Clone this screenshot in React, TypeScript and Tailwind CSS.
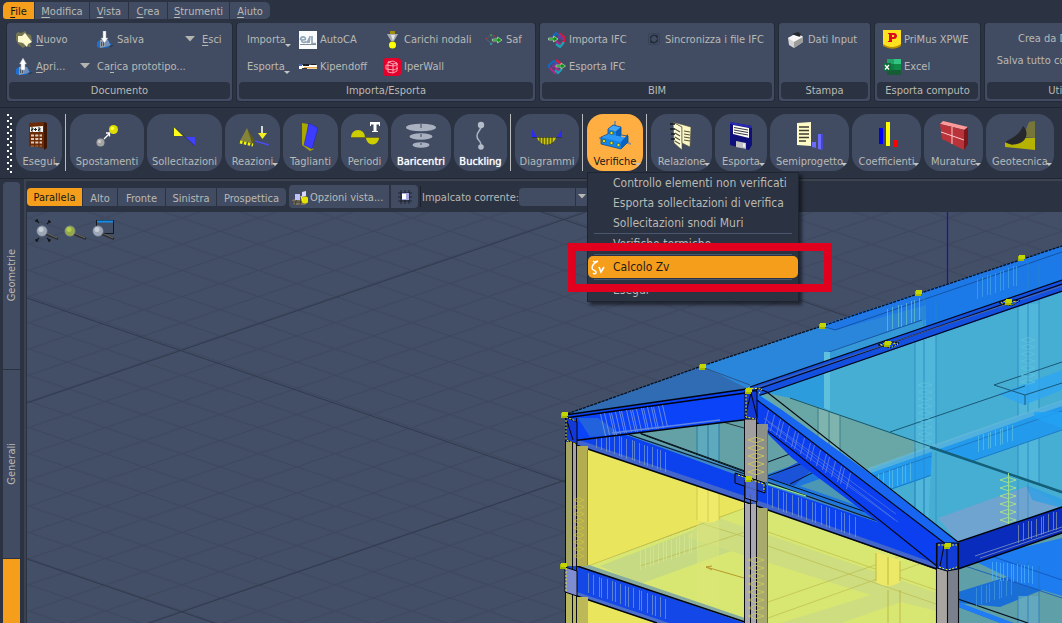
import React from "react";

type Kids = { children?: React.ReactNode };

const Svg = ({ w, h, children }: Kids & { w: number; h: number }) => (
  <svg width={w} height={h} viewBox={`0 0 ${w} ${h}`} className="shrink-0" aria-hidden="true">
    {children}
  </svg>
);

/* ---------- small ribbon icons ---------- */

const NewIcon = () => (
  <Svg w={18} h={18}>
    <path d="M1 3l2-2 3 1 4-2 2 3 4 1 1 5-2 4 1 3-5-1-3 2-5-4-2-4z" fill="#8c8a4c" opacity=".7" />
    <path d="M3 5l4 0 3-3 3 4 4 5-4 2-1 3-4-4-5-1z" fill="#fdf9cf" />
  </Svg>
);

const BuildingIcon = ({ up }: { up?: boolean }) => (
  <Svg w={18} h={18}>
    <path d="M1 11l3-2v8l-3-1z" fill="#1f6fd0" />
    <path d="M4 9l6-2 7 8-7 2-6 0z" fill="#0f62c4" />
    <path d="M4 9l5-1v8l-5 1z" fill="#8f9aa8" />
    <path d="M9 9l3 0 3 6-6 1z" fill="#6f8fb8" />
    <path d="M5 11h1v4H5zM7 11h1v4H7z" fill="#4a5566" />
    <path d={up ? "M6 12V6H4.500L8 0l3.500 6H10v6z" : "M7 0h3v7h2l-3.500 5L5 7h2z"} fill="#fff" stroke="#9aa3ad" strokeWidth=".5" />
    <path d="M12 15l6-1-3 2z" fill="#2a2d33" />
  </Svg>
);

const DwgIcon = () => (
  <Svg w={18} h={18}>
    <rect width="18" height="18" fill="#fafbfc" />
    <path d="M1.500 9c0-4 5-4 5-1 0 1-4 1-4 1 0 3 3 3 5 1.500M8 12l3-6M11 5l-1 7M13 5v7.500h4" fill="none" stroke="#93a6b8" strokeWidth="1.700" />
    <path d="M1 13.500h16" stroke="#53606d" strokeWidth=".7" />
  </Svg>
);

const KipIcon = () => (
  <Svg w={18} h={8}>
    <path d="M0 2h18v4H0z" fill="#fdfdfd" />
    <path d="M0 1h3v2H0z" fill="#3e64c4" />
    <path d="M4 1h6v2H4zM12 1h5v1h-5z" fill="#1b1d20" />
    <path d="M5 4h13v1.500H5z" fill="#e8a74a" />
    <path d="M3 5h5v1H3z" fill="#30343a" />
  </Svg>
);

const LoadIcon = () => (
  <Svg w={18} h={18}>
    <path d="M7 0h5v4H7z" fill="#a58d10" />
    <path d="M4 3h11l-4 7H8z" fill="#a9adb2" />
    <path d="M8 4l2 6 2-6z" fill="#e4e6e8" />
    <circle cx="9.500" cy="14" r="3.500" fill="#ffff00" />
  </Svg>
);

const IperIcon = () => (
  <Svg w={18} h={18}>
    <rect width="18" height="18" rx="3.500" fill="#e4002b" />
    <path d="M5 4l5-1 4 2v8l-4 2-5-1zM5 4l5 2 4-1M10 6v9M3 7l8 1 4-2M3 11l8 1 4-2M3 7v4" fill="none" stroke="#ffc4ce" strokeWidth=".8" />
  </Svg>
);

const GreenArrow = ({ x = 0, y = 0 }: { x?: number; y?: number }) => (
  <path
    transform={`translate(${x} ${y})`}
    d="M.5 3h5V1L10 4 5.500 7V5h-5z"
    fill="#0d8f13"
    stroke="#bfe0bf"
    strokeWidth=".7"
  />
);

const SafIcon = () => (
  <Svg w={18} h={14}>
    <path d="M1 6l5-4 6 3-5 6zM1 6l6 5M6 2l1 9" fill="none" stroke="#58606a" strokeWidth=".8" />
    <path d="M0 5h2v1H0zM8 2h1.500v1.500H8z" fill="#b83232" />
    <circle cx="6" cy="11" r="1" fill="#29a0b8" />
    <circle cx="6" cy="2" r="1" fill="#3f9c55" />
    <GreenArrow x={7} y={3} />
  </Svg>
);

const IfcIcon = ({ out }: { out?: boolean }) => (
  <Svg w={18} h={16}>
    <g fill="none" strokeWidth="2.200">
      <path d={out ? "M1 9V6l5-4 4 3" : "M5 5l3-4 5 4"} stroke="#1767b8" />
      <path d={out ? "M8 1l4 3v3" : "M11 1l5 4v4l-3 3"} stroke="#d81b3c" />
      <path d={out ? "M2 9l5 5 3-3-4-4" : "M7 8l5 5"} stroke="#b3268f" />
      <path d={out ? "M7 11l3 3 4-4" : "M8 12l4 3 4-5"} stroke="#1d9fb4" />
      <path d={out ? "M4 8l3-3 3 2" : "M9 7l3-3 3 4"} stroke="#6b3ca0" />
    </g>
    <GreenArrow x={out ? 7.500 : 0} y={3} />
  </Svg>
);

const SyncIcon = () => (
  <Svg w={16} h={16}>
    <rect x="2.500" y="1.500" width="11" height="11" rx="1.500" fill="none" stroke="#38425a" />
    <path d="M4.500 6.500A3.500 3.500 0 0 1 11 5V3M11.500 7.500A3.500 3.500 0 0 1 5 9v2" fill="none" stroke="#232a38" strokeWidth="1.500" />
  </Svg>
);

const PrinterIcon = () => (
  <Svg w={18} h={18}>
    <path d="M1 7l9-5 6 4v5l-9 6-5-3z" fill="#d3d3d3" />
    <path d="M1 7l6 4 9-5-6-4z" fill="#f4f4f4" />
    <path d="M7 11l9-5v5l-9 6z" fill="#9c9c9c" />
    <path d="M5 3l6-2 3 2-1 3-6-2z" fill="#25282c" />
    <path d="M7 5l4 2 2-1" stroke="#fff" fill="none" />
  </Svg>
);

const PrimusIcon = () => (
  <Svg w={18} h={19}>
    <path d="M0 0h18v15c-6 5-12 3-18 0z" fill="#ffe21f" />
    <path d="M0 14c6 4 12 4 18 0v2c-6 4-12 3-18 0z" fill="#b88f00" />
    <path d="M5 3h6c4 0 4 6 0 6H9v3H5V11h1V4H5zM9 5v2h1.500c1 0 1-2 0-2z" fill="#dc0a1e" />
  </Svg>
);

const ExcelIcon = () => (
  <Svg w={18} h={16}>
    <rect x="4" width="7" height="16" fill="#107c41" />
    <rect x="11" width="7" height="5" fill="#33c481" />
    <rect x="4" width="7" height="5" fill="#21a366" />
    <rect x="11" y="5" width="7" height="6" fill="#108a48" />
    <rect x="4" y="11" width="14" height="5" fill="#185c37" />
    <rect y="4" width="8" height="8" fill="#0f6e3a" />
    <path d="M2 6l4 4.500M6 6l-4 4.500" stroke="#fff" strokeWidth="1.300" />
  </Svg>
);

const Caret = () => (
  <Svg w={10} h={8}>
    <path d="M0 0h10L5 5.500z" fill="#b4b4b0" />
  </Svg>
);

const Tick = () => (
  <Svg w={6} h={4}>
    <path d="M0 0h6L3 3z" fill="#c4c4c0" />
  </Svg>
);

/* ---------- large toolbar icons ---------- */

const CalcIcon = () => (
  <Svg w={30} h={30}>
    <path d="M5 2l15-1v26l-15-2z" fill="#6b2a05" />
    <path d="M20 1l3 1v25l-3 2z" fill="#3d1703" />
    <path d="M6 6l13-1v6l-13 0z" fill="#f5f5f0" />
    <path d="M7 7h2v1.500H7.500V10H9M10 8.500h3M11.500 7v3M14 7h2v1.500h-1.500V10h2" stroke="#222" fill="none" />
    <path d="M7 14.500h11M7 18h11M7 21.500h11" stroke="#d9cbbd" strokeWidth="2" strokeDasharray="3 1.300" />
    <path d="M7 25h11" stroke="#a77b58" strokeWidth="1" strokeDasharray="3 1.300" />
  </Svg>
);

const MoveIcon = () => (
  <Svg w={30} h={30}>
    <circle cx="8.500" cy="21.500" r="4" fill="#a4a4a4" />
    <circle cx="7.500" cy="20.500" r="1.500" fill="#cfcfcf" />
    <circle cx="21.500" cy="8.500" r="4.500" fill="#dede00" />
    <circle cx="20.500" cy="7.500" r="1.800" fill="#ffff3c" />
    <path d="M12 18l5-5M14 12h3.500v3.500" stroke="#fff" strokeWidth="1.300" fill="none" />
  </Svg>
);

const StressIcon = () => (
  <Svg w={30} h={30}>
    <path d="M4 6l9 9H4z" fill="#ffff19" />
    <path d="M15 16h10v9z" fill="#4040ff" />
    <path d="M4 6l21 19" stroke="#27272a" strokeWidth=".5" />
  </Svg>
);

const ReactIcon = () => (
  <Svg w={32} h={30}>
    <path d="M10 7l8 13-5 3z" fill="#5c5a1e" />
    <path d="M10 7L3 20l12 2z" fill="#85833a" />
    <path d="M3 21l13 3" stroke="#f3f300" strokeWidth="3" strokeDasharray="2.500 1.500" />
    <path d="M25 5v8" stroke="#d6d6d6" strokeWidth="2" />
    <path d="M21 12h9l-4.500 6z" fill="#f5ee1f" />
    <path d="M18 20l14 4" stroke="#4b4bf0" strokeWidth="1.500" />
  </Svg>
);

const CutIcon = () => (
  <Svg w={30} h={30}>
    <path d="M6 2l6 1-2 21 8 4-4 2-8-6z" fill="#a9a800" />
    <path d="M13 2l9 5-6 21-8-4z" fill="#3c3cff" stroke="#2020b8" strokeWidth=".5" />
  </Svg>
);

const PeriodIcon = () => (
  <Svg w={32} h={30}>
    <path d="M2 16a7 7 0 0 1 14 0z" fill="#cdcd00" />
    <path d="M17 17a6.500 6.500 0 0 0 13 0z" fill="#cdcd00" />
    <path d="M2 16.500h28" stroke="#6e6d23" />
    <path d="M21 1h10v4h-1V3.500h-2.500V10H29v1h-6v-1h1.500V3.500H22V5h-1z" fill="#fff" />
  </Svg>
);

const DisksIcon = () => (
  <Svg w={32} h={30}>
    <g fill="#a9b0bf">
      <ellipse cx="16" cy="6.500" rx="15" ry="3.800" />
      <ellipse cx="16" cy="15.500" rx="11.500" ry="3.200" />
      <ellipse cx="16" cy="24" rx="8.500" ry="2.700" />
    </g>
    <path d="M16 3v4M16 13v3M16 22v2" stroke="#3f4a61" />
  </Svg>
);

const BucklingIcon = () => (
  <Svg w={20} h={30}>
    <path d="M10 5c0 5-4 5-4 10s4 4 4 9" stroke="#a9b0bf" strokeWidth="1.600" fill="none" />
    <circle cx="10" cy="4" r="3.200" fill="#b4bbc9" />
    <circle cx="10" cy="26" r="2.800" fill="#b4bbc9" />
  </Svg>
);

const DiagramIcon = () => (
  <Svg w={32} h={30}>
    <path d="M1 8l5 8H1zM31 8l-5 8h5z" fill="#2c2cf0" />
    <path d="M6 16h19c-2 10-17 10-19 0z" fill="#cfcb00" />
    <path d="M9 16v6M12 16v8M15 16v8M18 16v8M21 16v7" stroke="#33331a" />
    <path d="M1 16.500h30" stroke="#22283a" strokeWidth=".6" />
  </Svg>
);

const BlocksIcon = () => (
  <Svg w={32} h={30}>
    <path d="M0 17l12 2M24 20l8 3M16 0v8" stroke="#8f8f8f" strokeWidth="2" />
    <path d="M9 8l5-4 8 2-3 4z" fill="#41a8ff" />
    <path d="M9 8l8 2v7l-8-2z" fill="#1386ee" />
    <path d="M17 10l5-4v10l-5 3z" fill="#0863c0" />
    <path d="M2 17l7-4 20 4-5 5z" fill="#2c98f8" />
    <path d="M2 16l20 5v7L2 23z" fill="#1386ee" />
    <path d="M22 21l7-8v8l-7 7z" fill="#0863c0" />
    <path d="M9 8l5-4 8 2v8l7 1v6l-7 7L2 23v-7l7-3z" fill="none" stroke="#0a4c98" strokeWidth=".8" />
    <g fill="#f2e21c" stroke="#274b1c" strokeWidth=".6">
      <circle cx="12.500" cy="12" r="1.600" />
      <circle cx="5" cy="20" r="1.600" />
      <circle cx="12.500" cy="22" r="1.600" />
      <circle cx="19.500" cy="24" r="1.600" />
    </g>
  </Svg>
);

const NotebookIcon = () => (
  <Svg w={30} h={30}>
    <path d="M6 1l9 5v23l-8-7z" fill="#fffbd6" stroke="#494936" strokeWidth=".6" />
    <path d="M6 1l18 5-1 20-8-4V6z" fill="#fbf7c4" stroke="#494936" strokeWidth=".6" />
    <path d="M17 10l6 1M17 13l6 1M17 16l6 1M17 19l6 1M8 8l5 3M8 12l5 3M8 16l5 3M8 20l5 3" stroke="#55543c" strokeWidth="1.100" />
    <path d="M3 3h5M3 8h5M4 13h4M4 18h4" stroke="#15161a" strokeWidth="1.500" />
  </Svg>
);

const FloppyIcon = () => (
  <Svg w={30} h={30}>
    <path d="M4 1l22 4v19l-3 5-19-5z" fill="#10107a" />
    <path d="M4 1l22 4v2L4 3z" fill="#2b2bb4" />
    <path d="M7 4l16 3v10L7 13z" fill="#fdfdf4" />
    <path d="M8 6.500l14 2.500M8 9l14 2.500M8 11.500l14 2.500" stroke="#3b3b44" />
    <path d="M10 20l10 2v6l-10-2z" fill="#c2c2c2" />
    <path d="M17 22l2 .5v4l-2-.5z" fill="#eee" />
  </Svg>
);

const SemiIcon = () => (
  <Svg w={30} h={30}>
    <path d="M2 2l14-1v24l-14-1z" fill="#fdfac8" />
    <path d="M4 6h10M4 9.500h10M4 13h10M4 16.500h10M4 20h7" stroke="#3e3d30" strokeWidth="1.300" />
    <path d="M17 21h4v6l-4-1zM23 13h5v16l-5-1z" fill="#6b6bff" />
    <path d="M26 13h2v16h-2z" fill="#4747c4" />
  </Svg>
);

const CoefIcon = () => (
  <Svg w={30} h={30}>
    <path d="M7 7h4v16H7z" fill="#0000f5" />
    <path d="M14 1h4v24h-4z" fill="#ffff00" />
    <path d="M21 19h5v7h-5z" fill="#ff0000" />
  </Svg>
);

const WallIcon = () => (
  <Svg w={32} h={30}>
    <path d="M2 3l3-3 25 6-3 3z" fill="#ff9a9a" />
    <path d="M2 3l24 6v20L4 18z" fill="#b8343a" />
    <path d="M26 9l4-3v17l-4 6z" fill="#7d161a" />
    <path d="M3 11l23 8M14 6v17" stroke="#ffc9c9" strokeWidth="1" />
  </Svg>
);

const GeoIcon = () => (
  <Svg w={32} h={30}>
    <path d="M31 0v17l-12-1L25 1z" fill="#77763a" />
    <path d="M1 21l7 3 12-7h11v12L1 26z" fill="#b5b300" />
    <path d="M1 21C9 17 16 13 19 5a10 10 0 0 1-3 17C10 25 5 23 1 21z" fill="#26282d" />
  </Svg>
);

/* ---------- ribbon building blocks ---------- */

const Mnemonic = ({ text, at = 0 }: { text: string; at?: number }) => (
  <span className="whitespace-pre">
    {text.slice(0, at)}
    <span className="underline underline-offset-2">{text[at]}</span>
    {text.slice(at + 1)}
  </span>
);

const Cmd = ({ icon, children, caret }: Kids & { icon?: React.ReactNode; caret?: boolean }) => (
  <button className="flex h-[27px] items-center gap-[3px] whitespace-nowrap text-left">
    {icon}
    <span>{children}</span>
    {caret && (
      <span className="-ml-1 mt-3">
        <Tick />
      </span>
    )}
  </button>
);

const Group = ({ title, size, children }: Kids & { title: string; size: string }) => (
  <section className={`flex h-[78px] shrink-0 flex-col rounded-[3px] bg-[#414c63] p-0.5 shadow-[0_0_0_1px_#242b38] ${size}`}>
    <div className="h-[57px] pt-px">{children}</div>
    <h2 className="h-[17px] rounded-[4px] bg-[#2b3241] text-center leading-[18px]">{title}</h2>
  </section>
);

type ToolProps = {
  icon: React.ReactNode;
  label: string;
  size: string;
  menu?: boolean;
  bold?: boolean;
  active?: boolean;
};

const Tool = ({ icon, label, size, menu, bold, active }: ToolProps) => (
  <button
    className={`relative flex h-[57px] shrink-0 flex-col items-center rounded-2xl pt-[7px] ${size} ${
      active ? "bg-[#ffae42] text-[#181818]" : bold ? "bg-[#414c63] text-white [text-shadow:0_0_1px_#fff]" : "bg-[#414c63]"
    }`}
  >
    {icon}
    <span className="mt-[3px] whitespace-nowrap leading-4">{label}</span>
    {menu && (
      <span className="absolute bottom-1 right-0.5">
        <Tick />
      </span>
    )}
  </button>
);

const Bar = () => <div className="h-[57px] w-0.5 shrink-0 border-r border-[#2b3241] bg-[#b9bbbd]" />;

/* ---------- menu ---------- */

const MenuRule = () => <hr className="mx-1.5 border-0 border-t border-[#4a5670]" />;

const MenuEntry = ({ children }: Kids) => (
  <button role="menuitem" className="block h-5 w-full whitespace-nowrap pl-[25px] text-left leading-5">
    {children}
  </button>
);

const VerificheMenu = () => (
  <div
    role="menu"
    className="absolute left-0 top-[58px] z-20 w-[212px] border border-[#1e2430] bg-[#2b3241] pb-px text-xs shadow-[3px_3px_3px_rgba(0,0,0,0.5)]"
  >
    <MenuEntry>Controllo elementi non verificati</MenuEntry>
    <MenuEntry>Esporta sollecitazioni di verifica</MenuEntry>
    <MenuEntry>Sollecitazioni snodi Muri</MenuEntry>
    <MenuRule />
    <MenuEntry>Verifiche termiche</MenuEntry>
    <MenuRule />
    <div className="relative py-px">
      <button role="menuitem" className="flex h-[22px] w-[210px] items-center rounded-[5px] bg-[#f59e1c] text-left text-[#1c1c1c]">
        <span className="w-[25px] pl-0.5">
          <Svg w={16} h={16}>
            <path d="M3 2c1 1 3 1 5 0-4 2-6 5-6 7 0 3 5 2 4 5-1 1-2 1-3 0" fill="none" stroke="#fff" strokeWidth="1.400" />
            <path d="M9 8l2 5 3-5" fill="none" stroke="#fff" strokeWidth="1.600" />
          </Svg>
        </span>
        Calcolo Zv
      </button>
      <div className="pointer-events-none absolute -bottom-[13px] -left-5 -right-[34px] -top-3 border-8 border-[#e2001f]" />
    </div>
    <MenuRule />
    <MenuEntry>Esegui</MenuEntry>
  </div>
);

/* ---------- 3D model ---------- */

type HatchProps = { a: [number, number]; b: [number, number]; h: number; n: number; c: string; lean?: number; o?: number };

const Hatch = ({ a, b, h, n, c, lean = 0, o = 0.7 }: HatchProps) => {
  let d = "";
  for (let i = 0; i < n; i++) {
    const t = (i + ((i * 7) % 3) * 0.2) / n;
    const x = Math.round(a[0] + (b[0] - a[0]) * t) + 0.5;
    const y = Math.round(a[1] + (b[1] - a[1]) * t);
    d += `M${x} ${y}l${lean} ${h}`;
  }
  return <path d={d} stroke={c} strokeWidth="1" fill="none" opacity={o} />;
};

const Zig = ({ x, y, w, n, step, c }: { x: number; y: number; w: number; n: number; step: number; c: string }) => {
  let d = "";
  for (let i = 0; i < n; i++) {
    d += `M${x - w} ${y + i * step}l${w} ${step / 3}l${w} ${-step / 3}l${-w} ${-step / 3}z`;
  }
  return <path d={d} fill="none" stroke={c} strokeWidth=".8" />;
};

const joints: [number, number][] = [
  [564, 415], [702, 367], [822, 326], [918, 293], [1021, 258], [748, 391], [887, 344], [1008, 302], [748, 479], [947, 546], [563, 566],
];

const Model = () => (
  <svg
    viewBox="27 212 1035 411"
    preserveAspectRatio="xMinYMin slice"
    className="absolute inset-0 h-full w-full"
    role="img"
    aria-label="Modello strutturale 3D"
  >
    <defs>
      <pattern id="grid" x="67" y="257.300" width="76.600" height="26.200" patternUnits="userSpaceOnUse">
        <path d="M0 0l76.600 26.200M0 26.200L76.600 0" stroke="#3b465b" strokeWidth=".9" fill="none" />
      </pattern>
    </defs>
    <rect x="27" y="212" width="1035" height="411" fill="#434e67" />
    <rect x="27" y="212" width="1035" height="411" fill="url(#grid)" />
    <g stroke="#2f394b" strokeWidth=".9">
      <path d="M27 298l950 325M27 559l190 65M527 207l600 205" />
      <path d="M27 403L586 212M27 665L700 434" />
    </g>
    <path d="M947.500 212v73" stroke="#1414b4" strokeWidth="1.200" />

    {/* roof slopes */}
    <path d="M564 415L702 366l48 24-182 26z" fill="#2f6cb3" />
    <path d="M702 366l360-120v42L750 390z" fill="#2a86db" />
    <path d="M822 325l240-79v22L835 330z" fill="#1f78e6" />
    <path d="M824 353l100-33 138-46v14L824 366z" fill="#3aa0d6" opacity=".7" />
    <path d="M926 295l136-46v32l-136 47z" fill="#1c7ae8" />
    <path d="M822 326l13 4 227-78M826 353l96-33" fill="none" stroke="#104a96" strokeWidth=".8" />

    {/* right hand volume */}
    <path d="M750 391L1062 288v335H948l-10-70z" fill="#46aed3" />
    <path d="M757 390l33 8 140 49-62 23-8 8z" fill="#68a7a6" />
    <path d="M757 391l68-23v41l-35-11z" fill="#2d9cdd" />
    <path d="M830 352h-6v56l6 2z" fill="#5fc0de" />
    <path d="M868 470v110" stroke="#3a8fc0" fill="none" />
    <g>
      <path d="M915 330h21v190h-21z" fill="#56bcdf" opacity=".6" />
      <path d="M915 332v188M924 295v225M936 300v220" stroke="#2a86bd" strokeWidth="1" opacity=".8" />
      <path d="M1018 304h21v236h-21z" fill="#56bcdf" opacity=".6" />
      <path d="M1018 304v236M1028 262v278M1039 265v275" stroke="#2a86bd" strokeWidth="1" opacity=".8" />
      <path d="M818 408l22 8v48h-22z" fill="#8fbab4" opacity=".6" />
      <path d="M818 408v56M829 412v52M840 416v48" stroke="#3d7f8c" />
    </g>
    <path d="M790 500l140-52 132-47v29l-180 63-114 0z" fill="#249aec" />
    <path d="M868 468l62-22 132-46v6L868 474z" fill="#66b9d8" opacity=".7" />
    <path d="M868 478l194-67M868 497l194-67" stroke="#1b73bd" strokeWidth=".8" />
    <path d="M998 394l64-24v20l-38 15z" fill="#2ea5f2" opacity=".8" />
    <path d="M1062 362l-68 23 31 10 37-12M1025 395v10M890 432l135-46" stroke="#1a5876" strokeWidth="1" fill="none" />
    <path d="M1034 412h28v16l-28-10z" fill="#22a2f5" opacity=".8" />
    <path d="M932 449l130 44v60H938l-10-24z" fill="#46aed3" />
    <path d="M938 518l90-32 34 20-104 36z" fill="#6fa4d0" />
    <path d="M1026 485l36 14v9l-30-8z" fill="#2a9de8" opacity=".7" />
    <path d="M790 398l142 49 130 46" stroke="#1a5566" strokeWidth="1" fill="none" />
    <path d="M930 447l132 45" stroke="#14607a" strokeWidth="2.500" />
    <path d="M915 449v80M924 449v85M936 452v85M1018 480v50M1028 482v50" stroke="#2a86bd" strokeWidth="1" opacity=".6" />
    <Hatch a={[978, 436]} b={[1014, 424]} h={16} n={9} c="#5fc0df" />
    <Hatch a={[878, 474]} b={[914, 462]} h={18} n={8} c="#5fc0df" />
    <Hatch a={[887, 309]} b={[923, 297]} h={22} n={8} c="#6cc2c8" />
    <Hatch a={[977, 279]} b={[1020, 264]} h={20} n={10} c="#46a5e6" />
    <Zig x={925} y={385} w={7} n={9} step={7} c="#5cc2dc" />
    <Zig x={1028} y={340} w={7} n={7} step={7} c="#5cc2dc" />
    <Zig x={1008} y={480} w={8} n={6} step={8} c="#b4e878" />
    <path d="M1008.500 473v52" stroke="#9be08a" />

    {/* ridge beam */}
    <path d="M750 387L1062 280v12L758 396z" fill="#1450e0" />
    <path d="M750 387L1062 280M752 391L1062 284M758 396L1062 291" stroke="#04081a" strokeWidth="1.200" />
    <path d="M752 389L1062 286" stroke="#5b6f94" strokeWidth=".8" />
    <path d="M564 415L702 366 1062 246" fill="none" stroke="#06101f" strokeWidth="1.300" strokeDasharray="3 1" />
    <path d="M702 367l48 18" stroke="#2b5589" />

    {/* area under the left rafter */}
    <path d="M577 440l68-14 100-9v62l-145-45z" fill="#64a1a6" />
    <path d="M697 424h22v60l-22-6z" fill="#5fa9bd" />
    <path d="M697 424v50M708 422v58M719 421v62" stroke="#2d7ba2" />
    <path d="M757 424l71 50-60 14-11-10z" fill="#64a1a6" />
    <path d="M705 418l6-2M705 417l39 11" stroke="#26343a" fill="none" />

    {/* yellow wall */}
    <path d="M577 442l168 60 191 68v53H577z" fill="#e9e55c" />
    <path d="M588 566l157-58v-6l191 68v53H745l-157-55z" fill="#d8e672" />
    <path d="M600 566l110-42 35 12v10l-105 38z" fill="#c5da83" />
    <path d="M710 515l227 78v18l-36-9-60 21h-60l90-28-185-58z" fill="#cddd80" />
    <path d="M588 566l110-41 47-17M640 566l105-34M700 523l45 14M768 532l168 58M768 546l168 58M768 602l168-58M768 618l168-60" stroke="#b9b544" strokeWidth=".8" opacity=".7" />
    <path d="M697 484l22 8v28q-11 6-22 0z" fill="#efeb68" />
    <path d="M697 486v34M708 490v32M719 494v26" stroke="#c5c04a" opacity=".7" />
    <path d="M697 522h22v84l-22-8z" fill="#dfe97a" opacity=".4" />
    <path d="M876 552l24 8v22q-12 8-24 0z" fill="#ece868" />
    <path d="M876 553v28M888 557v28M900 561v20M888 590v33M900 590v33" stroke="#b5b03a" opacity=".8" />
    <Hatch a={[640, 550]} b={[700, 530]} h={20} n={14} c="#d8e690" />
    <path d="M706 567l38 11M706 567l6 3M706 567l6-1" stroke="#b79a2a" fill="none" />

    {/* roof diagonals behind the eave */}
    <path d="M768 474l40-14 52 20 77 66v-2l-169-62z" fill="#1f76dc" />
    <path d="M800 486l50-18 30 30-10 12z" fill="#4c98b4" />
    <path d="M768 478l34-18 12 8-20 18z" fill="#1b53d8" />
    <path d="M768 462l30-11M768 476l38-14M790 484l24-12" stroke="#061024" strokeWidth="1" />
    <path d="M640 433l105 38M765 477l173 60" stroke="#05101c" fill="none" />

    {/* eave beam */}
    <path d="M567 416l178 57 192 69v27l-192-67-180-61z" fill="#0c42ee" />
    <path d="M577 417l168 55 192 70-192-64z" fill="#3f86c4" />
    <path d="M567 436l178 60 192 68v5l-192-67-180-61z" fill="#4265cc" />
    <path d="M567 442l178 60 192 67" stroke="#020617" strokeWidth="1.500" fill="none" />
    <path d="M577 417l168 57 192 68" stroke="#0c1c2a" strokeWidth="1.200" fill="none" />
    <path d="M768 484l38 12" stroke="#9ff07a" strokeWidth="1.200" />
    <Hatch a={[596, 428]} b={[668, 453]} h={20} n={17} c="#7c9cc0" />
    <Hatch a={[772, 488]} b={[858, 518]} h={20} n={18} c="#7c9cc0" />

    {/* left rafter */}
    <path d="M565 416l180-27 5 30-179 22z" fill="#0a43f8" />
    <path d="M578 418l20 0 22 16-30 3z" fill="#2362dd" />
    <path d="M565 415l182-26M565 418l180-25M571 441l180-22" stroke="#02040d" strokeWidth="1.300" fill="none" />
    <Hatch a={[600, 414]} b={[664, 405]} h={22} n={18} c="#8aa4d6" lean={5} />
    <path d="M612 433l108-13" stroke="#5f86e0" strokeWidth="1.300" />
    <path d="M641 434l104 38" stroke="#05101c" />

    {/* hip rafter */}
    <path d="M757 397l190 148-9 22-146-109-35-35z" fill="#0b3ff0" />
    <path d="M756 393l26 17 83 60 93 72-11 3-190-145z" fill="#1765f0" />
    <path d="M757 388l10 4 191 150M757 400l190 145M757 423l35 27 146 117" stroke="#03060f" strokeWidth="1.100" fill="none" />
    <path d="M763 424l132 96M768 422l130 100M764 418l132 96" stroke="#4f72e0" strokeWidth=".8" />
    <Hatch a={[768, 410]} b={[854, 476]} h={16} n={17} c="#7891d4" lean={-4} />

    {/* right eave beam and floor below */}
    <path d="M958 569l104-36v90H958z" fill="#5f9fa8" />
    <path d="M958 592l104-32v22l-62 25-42-4z" fill="#1a6fd6" />
    <path d="M972 560l90-22v58l-40-12z" fill="#1c7cf0" />
    <path d="M965 566l97 32M985 554l77 26" stroke="#1354b8" strokeWidth=".8" />
    <path d="M1018 596h21v27h-21z" fill="#66acc8" opacity=".7" />
    <path d="M1018 560v63M1028 562v61M1039 566v57" stroke="#2573b8" opacity=".7" />
    <path d="M958 599l70 24M958 606l45 17" stroke="#05101c" strokeWidth="1.300" />
    <path d="M958 602l56 21h-14l-42-16z" fill="#1f7cf5" />
    <Hatch a={[992, 562]} b={[1034, 566]} h={18} n={12} c="#4fb4ff" />
    <Hatch a={[976, 588]} b={[1014, 576]} h={18} n={9} c="#4597d8" />
    <path d="M948 546l114-39v26l-104 36-11 2z" fill="#0a2cbc" />
    <path d="M958 542l104-35M958 569l104-36" stroke="#02040d" strokeWidth="1.500" />
    <Hatch a={[1018, 525]} b={[1060, 510]} h={18} n={10} c="#8b9b9a" />
    <path d="M975 556l87-29M980 558l82-28" stroke="#7d94c0" strokeWidth=".8" />

    {/* lower floor beam */}
    <path d="M565 567l12-1 168 55v2h-88l-92-31z" fill="#1347e8" />
    <path d="M577 566l12-1 156 53v5z" fill="#88aba0" />
    <path d="M565 588l104 35h-14l-90-31z" fill="#4c6fcc" />
    <path d="M577 566l168 56M565 592l92 31" stroke="#02040d" strokeWidth="1.400" />
    <Hatch a={[588, 573]} b={[668, 600]} h={20} n={18} c="#7c9cc0" />

    {/* columns */}
    <g>
      <path d="M565 442h12v124h-12z" fill="#a5a562" />
      <path d="M573 442h4v124h-4z" fill="#a8a2a0" />
      <path d="M577 446h11v120h-11z" fill="#b3ac50" />
      <path d="M565 592h12v31h-12z" fill="#b7b85e" />
      <path d="M577 597h11v26h-11z" fill="#bdb858" />
      <path d="M565.500 416v207M572.500 442v181M576.500 418v205" stroke="#0a0c12" />
      <path d="M587.500 450v115" stroke="#8d8830" />
      <Zig x={579} y={500} w={5} n={9} step={7} c="#cdc445" />
      <path d="M745 419h12v60h-12z" fill="#a29fa0" />
      <path d="M745 504h12v119h-12z" fill="#a9a8b0" />
      <path d="M757 508h11v115h-11z" fill="#a8a96c" />
      <path d="M757 424h11v58h-11z" fill="#8b9189" />
      <path d="M744.500 419v204M750.500 494v129M756.500 390v233" stroke="#0a0c12" strokeWidth="1" />
      <path d="M767.500 430v193" stroke="#6f7250" />
      <Zig x={756} y={440} w={8} n={5} step={8} c="#d8cc50" />
      <Zig x={756} y={560} w={8} n={8} step={8} c="#d0ca60" />
      <path d="M937 568h11v55h-11z" fill="#a8a5a0" />
      <path d="M948 570h10v53h-10z" fill="#7b818c" />
      <path d="M936.500 543v80M947.500 570v53M958.500 543v80" stroke="#0a0c12" strokeWidth="1.100" />
    </g>

    {/* joint blocks */}
    <g stroke="#02040d" strokeWidth="1">
      <path d="M566 417l11 5v22l-11-4z" fill="#1238d8" />
      <path d="M745 391h12v28h-12z" fill="#1238d8" />
      <path d="M735 473l30 10v10l-30-10z" fill="#1a44d0" />
      <path d="M745 480h12v22l-12-4z" fill="#5f74d0" fillOpacity=".8" />
      <path d="M937 543h21v26l-11 2-10-3z" fill="#123cd6" />
      <path d="M565 567l12 4v25l-12-4z" fill="#7f8ccf" />
    </g>
    <path d="M567 421l6 19M745 417l6-24 6 24M947 546v24M940 566l4-20" stroke="#02040d" fill="none" />
    <g fill="none" stroke="#f4f000" strokeDasharray="2 1.500">
      <path d="M566 420v20l10 4M566 417l10 4M746 395v22l10 2M738 475l26 9v8M566 568v23M938 545h19M939 567l9 3 9-3" />
      <path d="M748 388l14 1-4 6M880 345l8-3 10 2-8 4zM1000 303l8-3 10 2-8 4z" />
    </g>
    <path d="M878 345l9-4 12 2-9 5zM999 303l9-4 12 2-9 5z" fill="none" stroke="#05070d" strokeDasharray="2 1" />
    {joints.map(([x, y]) => (
      <g key={`${x}-${y}`}>
        <path d={`M${x - 3} ${y - 2}h6v5h-6z`} fill="#a4b800" />
        <path d={`M${x - 2} ${y - 3}h6v4h-6z`} fill="#c4d600" />
      </g>
    ))}
  </svg>
);

const Lens = ({ kind }: { kind: "fit" | "zoom" | "window" }) => (
  <Svg w={24} h={24}>
    {kind === "fit" && (
      <path d="M1 1l3 3M1 1h2M1 1v2M15 2l-3 3M15 2h-2M15 2v2M1 22l3-3M1 22h2M1 22v-2M15 22l-3-3M15 22h-2M15 22v-2" stroke="#14171d" strokeWidth="1.300" />
    )}
    {kind === "window" && (
      <>
        <rect x="5.500" y="1.500" width="17" height="13" fill="none" stroke="#15181f" />
        <path d="M6 2.500h16" stroke="#148fe8" strokeWidth="2" />
      </>
    )}
    <path d="M11 15l12 5" stroke="#292a2b" strokeWidth="2.200" />
    <path d="M12 14.500l10 4.500" stroke="#77746c" strokeWidth=".8" />
    <circle cx="7" cy="12" r="5.200" fill={kind === "zoom" ? "#93a94a" : "#9ca6b6"} stroke="#74808f" strokeWidth=".6" />
    <circle cx="6" cy="10.500" r="2.500" fill={kind === "zoom" ? "#b5cc53" : "#c6cdd6"} />
  </Svg>
);

/* ---------- page ---------- */

const menus: [string, string][] = [
  ["File", "w-[31px] rounded-tl-[5px] rounded-bl-[3px] bg-[#f59e1c] text-[#161616]"],
  ["Modifica", "w-[54px] bg-[#414c63]"],
  ["Vista", "w-[38px] bg-[#414c63]"],
  ["Crea", "w-[38px] bg-[#414c63]"],
  ["Strumenti", "w-[61px] bg-[#414c63]"],
  ["Aiuto", "w-[40px] rounded-r-[5px] bg-[#414c63]"],
];

const views: [string, string][] = [
  ["Parallela", "w-[55px] rounded-l-[4px] bg-[#f59e1c] leading-[19px] text-[#161616]"],
  ["Alto", "w-[34px] bg-[#414c63] leading-[21px]"],
  ["Fronte", "w-[47px] bg-[#414c63] leading-[21px]"],
  ["Sinistra", "w-[50px] bg-[#414c63] leading-[21px]"],
  ["Prospettica", "w-[69px] rounded-r-[4px] bg-[#414c63] leading-[21px]"],
];

export default function App() {
  return (
    <div className="flex min-h-screen flex-col overflow-hidden bg-[#2b3241] font-['DejaVu_Sans_Condensed','DejaVu_Sans',sans-serif] text-[11px] leading-4 text-[#b9b9b4]">
      <nav className="flex h-[23px] gap-px pl-[3px] pt-0.5">
        {menus.map(([label, style]) => (
          <button key={label} className={`h-[17px] shrink-0 leading-[19px] ${style}`}>
            <Mnemonic text={label} />
          </button>
        ))}
      </nav>

      <div className="flex gap-[5px] overflow-hidden pb-1.5 pl-[7px]">
        <Group title="Documento" size="w-[225px]">
          <div className="flex pl-1.5">
            <div className="w-[81px]"><Cmd icon={<NewIcon />}><Mnemonic text="Nuovo" /></Cmd></div>
            <div className="w-[89px]"><Cmd icon={<BuildingIcon />}>Salva</Cmd></div>
            <Cmd icon={<Caret />}><span className="pl-1"><Mnemonic text="Esci" /></span></Cmd>
          </div>
          <div className="flex pl-1.5">
            <div className="w-[65px]"><Cmd icon={<BuildingIcon up />}><Mnemonic text="Apri..." /></Cmd></div>
            <Cmd icon={<Caret />}><span className="pl-1"><Mnemonic text="Carica prototipo..." at={2} /></span></Cmd>
          </div>
        </Group>

        <Group title="Importa/Esporta" size="w-[298px]">
          <div className="grid grid-cols-[52px_84px_102px_1fr] pl-2">
            <Cmd caret>Importa</Cmd>
            <Cmd icon={<DwgIcon />}>AutoCA</Cmd>
            <Cmd icon={<LoadIcon />}>Carichi nodali</Cmd>
            <Cmd icon={<SafIcon />}>Saf</Cmd>
            <Cmd caret>Esporta</Cmd>
            <Cmd icon={<KipIcon />}>Kipendoff</Cmd>
            <Cmd icon={<IperIcon />}>IperWall</Cmd>
          </div>
        </Group>

        <Group title="BIM" size="w-[234px]">
          <div className="grid grid-cols-[98px_1fr] pl-1.5">
            <Cmd icon={<IfcIcon />}>Importa IFC</Cmd>
            <Cmd icon={<SyncIcon />}>Sincronizza i file IFC</Cmd>
            <Cmd icon={<IfcIcon out />}>Esporta IFC</Cmd>
          </div>
        </Group>

        <Group title="Stampa" size="w-[91px]">
          <div className="pl-1.5">
            <Cmd icon={<PrinterIcon />}>Dati Input</Cmd>
          </div>
        </Group>

        <Group title="Esporta computo" size="w-[105px]">
          <div className="flex flex-col items-start pl-1.5">
            <Cmd icon={<PrimusIcon />}>PriMus XPWE</Cmd>
            <Cmd icon={<ExcelIcon />}>Excel</Cmd>
          </div>
        </Group>

        <Group title="Utilità" size="w-[156px]">
          <div className="flex flex-col items-center pt-0.5">
            <button className="h-[22px] whitespace-nowrap">Crea da DXF/DWG</button>
            <button className="h-[22px] whitespace-nowrap">Salva tutto come prototipo</button>
          </div>
        </Group>
      </div>

      <div className="relative z-10 flex h-[71px] gap-[3px] border-t border-[#1f2531] pl-[7px] pt-1.5">
        <div className="-mr-px h-[60px] w-[7px] shrink-0 bg-[radial-gradient(circle_at_1px_1px,#fff_1px,transparent_1px),radial-gradient(circle_at_4px_4px,#fff_1px,transparent_1px)] bg-[length:7px_6px]" />
        <Tool icon={<CalcIcon />} label="Esegui" size="w-[46px]" menu />
        <Bar />
        <Tool icon={<MoveIcon />} label="Spostamenti" size="w-[74px]" />
        <Tool icon={<StressIcon />} label="Sollecitazioni" size="w-[75px]" />
        <Tool icon={<ReactIcon />} label="Reazioni" size="w-[55px]" menu />
        <Tool icon={<CutIcon />} label="Taglianti" size="w-[55px]" />
        <Tool icon={<PeriodIcon />} label="Periodi" size="w-[47px]" />
        <Tool icon={<DisksIcon />} label="Baricentri" size="w-[60px]" bold />
        <Tool icon={<BucklingIcon />} label="Buckling" size="w-[53px]" bold />
        <Bar />
        <Tool icon={<DiagramIcon />} label="Diagrammi" size="w-[64px]" />
        <Bar />
        <div className="relative shrink-0">
          <Tool icon={<BlocksIcon />} label="Verifiche" size="w-[56px]" menu active />
          <VerificheMenu />
        </div>
        <Bar />
        <Tool icon={<NotebookIcon />} label="Relazione" size="w-[61px]" menu />
        <Tool icon={<FloppyIcon />} label="Esporta" size="w-[52px]" menu />
        <Tool icon={<SemiIcon />} label="Semiprogetto" size="w-[79px]" menu />
        <Tool icon={<CoefIcon />} label="Coefficienti" size="w-[69px]" menu />
        <Tool icon={<WallIcon />} label="Murature" size="w-[59px]" menu />
        <Tool icon={<GeoIcon />} label="Geotecnica" size="w-[68px]" menu />
      </div>

      <div className="flex flex-1 border-t border-[#1f2531]">
        <aside className="flex w-6 shrink-0 flex-col gap-px pl-[3px] pr-1 pt-[3px]">
          <button className="flex h-[187px] items-center justify-center rounded-t-[4px] bg-[#414c63]">
            <span className="rotate-180 [writing-mode:vertical-rl]">Geometrie</span>
          </button>
          <button className="flex h-[188px] items-center justify-center bg-[#414c63]">
            <span className="rotate-180 [writing-mode:vertical-rl]">Generali</span>
          </button>
          <button aria-label="Vista 3D" className="flex-1 bg-[#f59e1c]" />
        </aside>

        <main className="flex min-w-0 flex-1 flex-col border-l-2 border-t-2 border-[#3c424e] pl-px">
          <div className="flex h-[31px] items-center">
            <div className="flex gap-px">
              {views.map(([label, style]) => (
                <button key={label} className={`h-[18px] shrink-0 ${style}`}>{label}</button>
              ))}
            </div>
            <button className="ml-[3px] flex h-[23px] w-[100px] shrink-0 items-center gap-0.5 whitespace-nowrap rounded-l-[4px] bg-[#414c63] pl-[3px] pt-0.5">
              <Svg w={16} h={16}>
                <path d="M0 10l5-2 11 3-3 4H2z" fill="#77705c" />
                <path d="M0 12h15M5 8l-2 7M9 9l-1 6" stroke="#39362e" strokeWidth=".8" />
                <rect x="3" y="4" width="5" height="6" fill="#c0c0ff" />
                <path d="M10 2l4-1v5l-4 1z" fill="#d8d8ff" />
                <circle cx="13" cy="10" r="3.500" fill="#e5e000" />
                <path d="M9 6l2 5" stroke="#f5f000" strokeWidth="1.500" />
              </Svg>
              Opzioni vista...
            </button>
            <button aria-label="Griglia" className="ml-0.5 flex h-[23px] w-[27px] shrink-0 items-center justify-center rounded-r-[4px] bg-[#414c63]">
              <Svg w={16} h={16}>
                <path d="M1 4h14M1 8h14M1 12h14M4 1v14M8 1v14M12 1v14" stroke="#161a24" strokeWidth=".8" />
                <rect x="5" y="4" width="7" height="7" fill="#a9a7e0" />
                <rect x="5" y="5" width="4" height="5" fill="#fff" />
              </Svg>
            </button>
            <div className="ml-0.5 h-[21px] w-px bg-[#1b202a]" />
            <label htmlFor="floor" className="ml-px shrink-0 whitespace-nowrap pt-0.5">Impalcato corrente:</label>
            <div className="relative flex h-[18px] w-[70px] shrink-0 items-center">
              <select id="floor" className="h-full w-full appearance-none rounded-l-[4px] bg-[#414c63]" />
              <span className="pointer-events-none absolute right-0 top-0 flex h-full w-3.5 items-center border-l border-[#2b3241] pl-0.5">
                <Svg w={8} h={5}>
                  <path d="M0 0h8L4 4.500z" fill="#b9b9b4" />
                </Svg>
              </span>
            </div>
          </div>

          <div className="relative min-h-[400px] flex-1 overflow-hidden">
            <Model />
            <div className="relative flex gap-1 pl-2 pt-[7px]">
              <button aria-label="Zoom estensione"><Lens kind="fit" /></button>
              <button aria-label="Zoom"><Lens kind="zoom" /></button>
              <button aria-label="Zoom finestra"><Lens kind="window" /></button>
            </div>
          </div>
        </main>
      </div>
    </div>
  );
}
